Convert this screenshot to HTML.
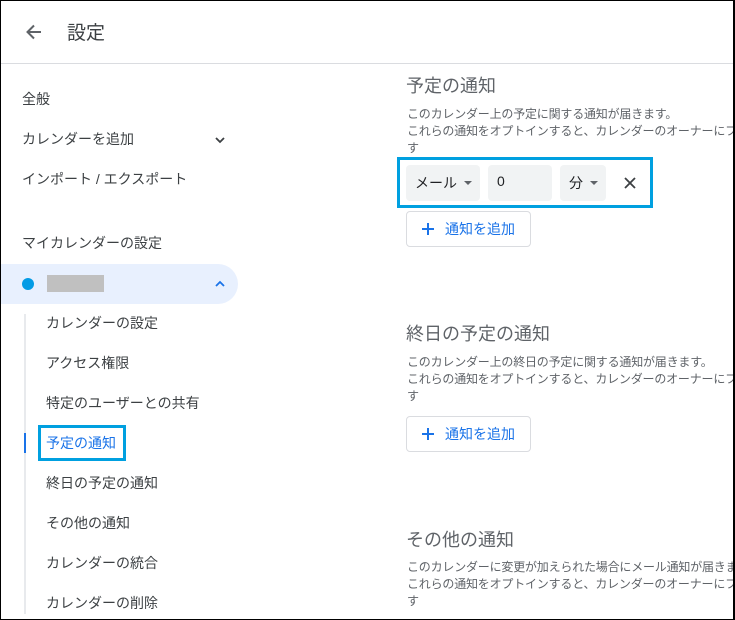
<!DOCTYPE html>
<html><head><meta charset="utf-8"><style>
*{margin:0;padding:0;box-sizing:border-box}
body{width:735px;height:620px;overflow:hidden;background:#fff;font-family:"Liberation Sans","Noto Sans CJK JP",sans-serif;position:relative;color:#3c4043}
.a{position:absolute;white-space:nowrap}
.frame{position:absolute;left:0;top:0;width:735px;height:620px;border:1px solid #000;border-right:2px solid #000;pointer-events:none;z-index:10}
.nav{font-size:14px;color:#3c4043}
.h{font-size:18px;color:#5f6368}
.p{font-size:12px;color:#5f6368;line-height:17px;letter-spacing:-0.2px}
.btn{position:absolute;width:125px;height:36px;border:1px solid #dadce0;border-radius:4px;color:#1a73e8;font-size:14px}
.btn span{position:absolute;left:38px;top:7px}
.btn i{position:absolute;left:14px;top:10px}
.sel{position:absolute;background:#f1f3f4;border-radius:4px;height:36px;font-size:14px;color:#202124}
.tri{position:absolute;width:0;height:0;border-left:4px solid transparent;border-right:4px solid transparent;border-top:4px solid #5f6368}
</style></head><body>
<div class="frame"></div>
<svg class="a" style="left:24px;top:22px" width="20" height="20" viewBox="0 0 20 20"><path d="M17 10H4M10 3.5L3.5 10L10 16.5" stroke="#5f6368" stroke-width="2" fill="none"/></svg>
<div class="a" style="left:67px;top:18px;font-size:19px;color:#3c4043">設定</div>
<div class="a" style="left:0;top:63px;width:735px;height:1px;background:#dadce0"></div>

<div class="a nav" style="left:22px;top:89px">全般</div>
<div class="a nav" style="left:22px;top:129px">カレンダーを追加</div>
<svg class="a" style="left:214px;top:135px" width="12" height="10" viewBox="0 0 12 10"><path d="M2 3l4 4 4-4" stroke="#3c4043" stroke-width="1.8" fill="none"/></svg>
<div class="a nav" style="left:22px;top:169px">インポート / エクスポート</div>
<div class="a nav" style="left:22px;top:233px">マイカレンダーの設定</div>
<div class="a" style="left:0;top:264px;width:238px;height:40px;background:#e8f0fe;border-radius:0 20px 20px 0"></div>
<div class="a" style="left:22px;top:278px;width:12px;height:12px;border-radius:50%;background:#039be5"></div>
<div class="a" style="left:47px;top:275px;width:57px;height:17px;background:#c0c0c0"></div>
<svg class="a" style="left:214px;top:279px" width="12" height="10" viewBox="0 0 12 10"><path d="M2 7l4-4 4 4" stroke="#1a73e8" stroke-width="1.8" fill="none"/></svg>
<div class="a" style="left:24px;top:314px;width:2px;height:300px;background:#e8eaed"></div>
<div class="a" style="left:24px;top:433px;width:2px;height:20px;background:#1a73e8"></div>
<div class="a nav" style="left:46px;top:313px">カレンダーの設定</div>
<div class="a nav" style="left:46px;top:353px">アクセス権限</div>
<div class="a nav" style="left:46px;top:393px">特定のユーザーとの共有</div>
<div class="a" style="left:38px;top:425px;width:88px;height:36px;border:3px solid #00a0e0"></div>
<div class="a nav" style="left:46px;top:433px;color:#1a73e8">予定の通知</div>
<div class="a nav" style="left:46px;top:473px">終日の予定の通知</div>
<div class="a nav" style="left:46px;top:513px">その他の通知</div>
<div class="a nav" style="left:46px;top:553px">カレンダーの統合</div>
<div class="a nav" style="left:46px;top:593px">カレンダーの削除</div>

<div class="a h" style="left:406px;top:72px">予定の通知</div>
<div class="a p" style="left:407px;top:106px">このカレンダー上の予定に関する通知が届きます。<br>これらの通知をオプトインすると、カレンダーのオーナーにフ<br>す</div>
<div class="a" style="left:397px;top:157px;width:256px;height:51px;border:3px solid #00a0e0"></div>
<div class="sel" style="left:406px;top:165px;width:74px"><span class="a" style="left:9px;top:8px">メール</span><div class="tri" style="left:58px;top:16px"></div></div>
<div class="sel" style="left:488px;top:165px;width:64px"><span class="a" style="left:9px;top:8px">0</span></div>
<div class="sel" style="left:560px;top:165px;width:46px"><span class="a" style="left:9px;top:8px">分</span><div class="tri" style="left:30px;top:16px"></div></div>
<svg class="a" style="left:623px;top:176px" width="14" height="14" viewBox="0 0 14 14"><path d="M2 2l10 10M12 2L2 12" stroke="#3c4043" stroke-width="1.8"/></svg>
<div class="btn" style="left:406px;top:211px"><i><svg width="14" height="14" viewBox="0 0 14 14"><path d="M7 1v12M1 7h12" stroke="#1a73e8" stroke-width="2"/></svg></i><span>通知を追加</span></div>

<div class="a h" style="left:406px;top:320px">終日の予定の通知</div>
<div class="a p" style="left:407px;top:354px">このカレンダー上の終日の予定に関する通知が届きます。<br>これらの通知をオプトインすると、カレンダーのオーナーにフ<br>す</div>
<div class="btn" style="left:406px;top:416px"><i><svg width="14" height="14" viewBox="0 0 14 14"><path d="M7 1v12M1 7h12" stroke="#1a73e8" stroke-width="2"/></svg></i><span>通知を追加</span></div>

<div class="a h" style="left:406px;top:526px">その他の通知</div>
<div class="a p" style="left:407px;top:559px">このカレンダーに変更が加えられた場合にメール通知が届きま<br>これらの通知をオプトインすると、カレンダーのオーナーにフ<br>す</div>
</body></html>
